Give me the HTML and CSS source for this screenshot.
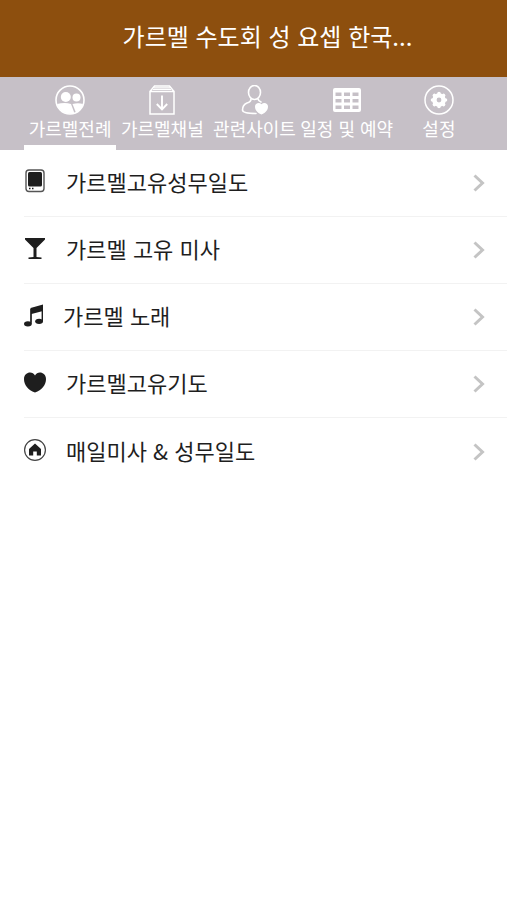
FILE: index.html
```html
<!DOCTYPE html>
<html lang="ko">
<head>
<meta charset="utf-8">
<meta name="viewport" content="width=device-width, initial-scale=1">
<title>가르멜 수도회 성 요셉 한국</title>
<link rel="stylesheet" href="styles.css">
</head>
<body>
<header class="header">
  <h1 class="title">가르멜 수도회 성 요셉 한국...</h1>
</header>
<nav class="tabs">
  <a class="tab active" href="#liturgy" aria-current="page">
    <svg class="tab-icon" viewBox="0 0 30 30">
      <circle cx="15" cy="15" r="14" fill="none" stroke="currentColor" stroke-width="1.6"/>
      <circle cx="10.8" cy="12" r="5" fill="currentColor"/>
      <circle cx="21.5" cy="12.5" r="4" fill="currentColor"/>
      <path d="M2 19Q10 17 16 19L19.500 28.200A14 14 0 0 1 2 19Z" fill="currentColor"/>
      <path d="M17.500 19Q23 17.500 28 19A14 14 0 0 1 21 27.800Z" fill="currentColor"/>
    </svg>
    <span>가르멜전례</span>
  </a>
  <a class="tab" href="#channel">
    <svg class="tab-icon" viewBox="0 0 30 30" fill="none" stroke="currentColor" stroke-width="1.500">
      <path d="M3 6.500H27V29H3ZM3 6.500L7.500 1H22.500L27 6.500"/>
      <path d="M6 4.500H24M7 2.800H23" stroke-width="1.200"/>
      <path d="M15 10.500V24M9.800 19L15 24.300L20.200 19" stroke-width="1.900"/>
    </svg>
    <span>가르멜채널</span>
  </a>
  <a class="tab" href="#sites">
    <svg class="tab-icon" viewBox="0 0 30 30">
      <g fill="none" stroke="currentColor" stroke-width="1.600" stroke-linecap="round">
        <ellipse cx="14.500" cy="7.500" rx="6" ry="7"/>
        <path d="M11 14Q11 17 7 18Q2.500 20 2.500 25Q2.500 28.500 16 28.500M18 14Q18.500 16 21 17"/>
      </g>
      <path d="M21.500 29.500C17 27.500 15 25 15 21.500C15 17.800 19.500 17 21.500 19.200C23.500 17 28 17.800 28 21.500C28 25 26 27.500 21.500 29.500Z" fill="currentColor"/>
    </svg>
    <span>관련사이트</span>
  </a>
  <a class="tab" href="#schedule">
    <svg class="tab-icon" viewBox="0 0 30 30">
      <path fill="currentColor" fill-rule="evenodd" d="M3 3H27Q29 3 29 5V25Q29 27 27 27H3Q1 27 1 25V5Q1 3 3 3ZM3.500 7.500V11H9.500V7.500ZM12 7.500V11H18V7.500ZM20.500 7.500V11H26.500V7.500ZM3.500 14V17.500H9.500V14ZM12 14V17.500H18V14ZM20.500 14V17.500H26.500V14ZM3.500 20.500V24H9.500V20.500ZM12 20.500V24H18V20.500ZM20.500 20.500V24H26.500V20.500Z"/>
    </svg>
    <span>일정 및 예약</span>
  </a>
  <a class="tab" href="#settings">
    <svg class="tab-icon" viewBox="0 0 30 30">
      <circle cx="15" cy="15" r="14" fill="none" stroke="currentColor" stroke-width="1.500"/>
      <circle cx="15" cy="15" r="4.600" fill="none" stroke="currentColor" stroke-width="4.400"/>
      <path d="M15 8.500V9M15 21V21.500M8.500 15H9M21 15H21.500M10.400 10.400L10.700 10.700M19.300 19.300L19.600 19.600M10.400 19.600L10.700 19.300M19.300 10.700L19.600 10.400" stroke="currentColor" stroke-width="3.600" stroke-linecap="round"/>
    </svg>
    <span>설정</span>
  </a>
</nav>
<main>
  <ul class="list">
    <li><a class="row" href="#office">
      <svg class="icon" viewBox="0 0 22 24">
        <rect x="2" y="1" width="18" height="21.500" rx="3" fill="#fff" stroke="#555" stroke-width="1.400"/>
        <rect x="4" y="3" width="14" height="14.500" rx="1.500" fill="currentColor"/>
        <path d="M5 19.500H6.500M8 19.500H9.500" stroke="currentColor" stroke-width="1.300"/>
      </svg>
      <span class="label">가르멜고유성무일도</span>
      <svg class="chevron" viewBox="0 0 12 18"><path d="M1.500 1.500L9.500 9L1.500 16.500"/></svg>
    </a></li>
    <li><a class="row" href="#mass">
      <svg class="icon" viewBox="0 0 22 24">
        <path d="M1 2H21V3.500L12.500 12V21L17.500 21.500V23H4.500V21.500L9.500 21V12L1 3.500Z" fill="currentColor"/>
      </svg>
      <span class="label">가르멜 고유 미사</span>
      <svg class="chevron" viewBox="0 0 12 18"><path d="M1.500 1.500L9.500 9L1.500 16.500"/></svg>
    </a></li>
    <li><a class="row" href="#songs">
      <svg class="icon icon-narrow" viewBox="0 0 19 24">
        <path d="M6.500 5L19 1.500V8L7.500 11V19H6.500Z" fill="currentColor"/>
        <path d="M7 6V20.500M18.300 3V18" stroke="currentColor" stroke-width="1.400"/>
        <ellipse cx="3.900" cy="20.800" rx="3.900" ry="2.600" fill="currentColor"/>
        <ellipse cx="15.100" cy="18.300" rx="3.900" ry="2.600" fill="currentColor"/>
      </svg>
      <span class="label">가르멜 노래</span>
      <svg class="chevron" viewBox="0 0 12 18"><path d="M1.500 1.500L9.500 9L1.500 16.500"/></svg>
    </a></li>
    <li><a class="row" href="#prayers">
      <svg class="icon" viewBox="0 0 22 24">
        <path d="M11 22.500C4 20 0 15 0 9C0 2 8.500 .500 11 5.500C13.500 .500 22 2 22 9C22 15 18 20 11 22.500Z" fill="currentColor"/>
      </svg>
      <span class="label">가르멜고유기도</span>
      <svg class="chevron" viewBox="0 0 12 18"><path d="M1.500 1.500L9.500 9L1.500 16.500"/></svg>
    </a></li>
    <li><a class="row" href="#daily">
      <svg class="icon" viewBox="0 0 22 24">
        <circle cx="11" cy="12" r="10.400" fill="#fff" stroke="#444" stroke-width="1.200"/>
        <path d="M11 5.500L17 11V17.500H12.800V13.500H9.200V17.500H5V11Z" fill="currentColor"/>
      </svg>
      <span class="label">매일미사 &amp; 성무일도</span>
      <svg class="chevron" viewBox="0 0 12 18"><path d="M1.500 1.500L9.500 9L1.500 16.500"/></svg>
    </a></li>
  </ul>
</main>
</body>
</html>
```
FILE: styles.css
```css
* {
  box-sizing: border-box;
}

body {
  margin: 0;
  background: #fff;
  color: #1e1e1e;
  font-family: "Noto Sans CJK KR", sans-serif;
}

a {
  color: inherit;
  text-decoration: none;
}

svg {
  display: block;
  flex: none;
}

.header {
  display: flex;
  align-items: center;
  justify-content: center;
  height: 77px;
  padding: 0 0 6px 28px;
  background: #8d4f0e;
  color: #fff;
}

.title {
  margin: 0;
  font-size: 24px;
  font-weight: 400;
  line-height: 36px;
  white-space: nowrap;
}

.tabs {
  display: flex;
  height: 73px;
  padding: 0 22px 0 24px;
  background: #c6c0c7;
  color: #fff;
}

.tab {
  display: flex;
  flex: 1 1 0;
  flex-direction: column;
  align-items: center;
  min-width: 0;
  padding-top: 8px;
  border-bottom: 5px solid transparent;
  font-size: 18px;
  line-height: 26px;
  white-space: nowrap;
}

.tab.active {
  border-bottom-color: #fff;
}

.tab-icon {
  width: 30px;
  height: 30px;
}

.list {
  margin: 0;
  padding: 0 0 0 24px;
  list-style: none;
}

.row {
  display: flex;
  align-items: center;
  gap: 20px;
  height: 67px;
  padding-right: 22px;
  border-bottom: 1px solid #f2f2f2;
  font-size: 22px;
  line-height: 32px;
}

.list li:last-child .row {
  border-bottom: 0;
}

.icon {
  width: 22px;
  height: 24px;
  margin-bottom: 4px;
}

.icon-narrow {
  width: 19px;
}

.label {
  flex: 1;
  padding-bottom: 4px;
}

.chevron {
  width: 12px;
  height: 18px;
  fill: none;
  stroke: #c4c4c4;
  stroke-width: 3;
}
```
